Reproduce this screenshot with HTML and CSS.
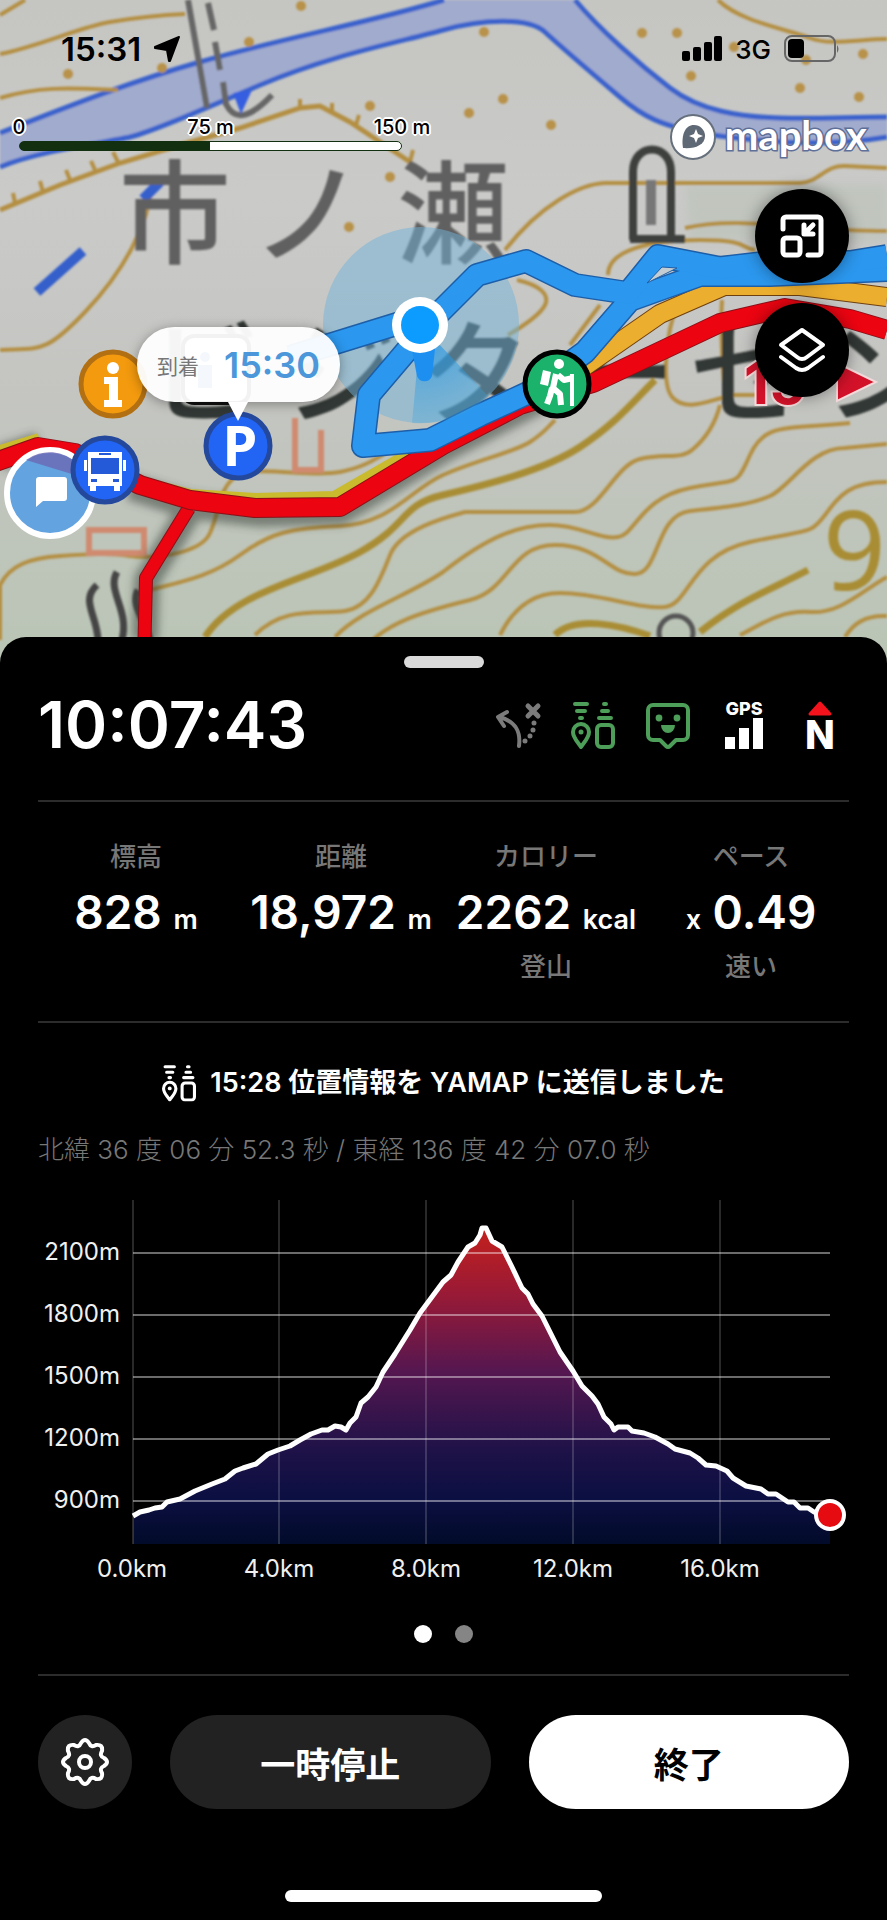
FILE: index.html
```html
<!DOCTYPE html>
<html lang="ja">
<head>
    <meta charset="utf-8">
    <meta name="viewport" content="width=device-width, initial-scale=1">
    <title>活動記録</title>
    <link rel="stylesheet" href="styles.css">
</head>
<body>
    <svg width="0" height="0" class="defs">
        <symbol id="mimamori" viewBox="0 0 44 48">
            <g fill="none" stroke="currentColor" stroke-width="4" stroke-linecap="round" stroke-linejoin="round">
                <path d="M4 3H16M6 10H14M9 17H11M33 3H35M31 10H37M28 17H40"/>
                <path d="M10 46C7 41 2 37 2 31a8 8 0 0 1 16 0c0 6-5 10-8 15z"/>
                <rect x="26" y="24" width="16" height="22" rx="4"/>
            </g>
            <circle cx="10" cy="31" r="2.5" fill="currentColor"/>
        </symbol>
    </svg>

    <section class="map">
        <svg class="map-art" viewBox="0 0 887 665" preserveAspectRatio="xMidYMin slice">
            <defs>
                <linearGradient id="ground" x1="0" y1="0" x2="0" y2="1">
                    <stop offset="0" stop-color="#c5c5c1"/>
                    <stop offset=".3" stop-color="#cacac9"/>
                    <stop offset=".6" stop-color="#c4c5c1"/>
                    <stop offset="1" stop-color="#bac5b5"/>
                </linearGradient>
                <radialGradient id="beam" gradientUnits="userSpaceOnUse" cx="420" cy="325" r="98">
                    <stop offset="0" stop-color="#1590ea"/>
                    <stop offset="1" stop-color="#3fa3dc" stop-opacity=".4"/>
                </radialGradient>
                <filter id="soft"><feGaussianBlur stdDeviation="1.2"/></filter>
                <filter id="shade"><feGaussianBlur stdDeviation="4"/></filter>
            </defs>
            <rect width="887" height="665" fill="url(#ground)"/>
            <g filter="url(#soft)">
                <path fill="#b7c1b3" d="M685 185H887V240H690z" opacity=".5" filter="url(#shade)"/>
                <!-- river -->
                <path fill="#a1abcd" d="M0 133C60 110 120 85 200 62S380 20 444 0H575C600 30 640 65 670 88S740 117 780 118S850 117 887 117V137C840 145 780 142 720 136S640 112 620 97S565 45 545 32S480 15 443 30S330 55 260 85S150 135 130 137S40 150 0 167z"/>
                <g fill="none" stroke="#3a62cc" stroke-width="5">
                    <path d="M0 133C60 110 120 85 200 62S380 20 444 0M575 0C600 30 640 65 670 88S740 117 780 118S850 117 887 117"/>
                    <path d="M0 167C40 150 110 142 130 137S190 115 260 85S400 42 443 30S530 18 545 32S600 80 620 97S660 128 720 136S840 145 887 137"/>
                </g>
                <!-- contour lines -->
                <g fill="none" stroke="#b48f42" stroke-width="4">
                    <path d="M0 15L25 0M0 54C40 46 80 27 110 22S160 15 185 14M0 98C40 86 70 88 118 90M718 0C740 22 790 30 810 38S860 39 887 39"/>
                    <path d="M0 210L60 185L120 163L180 145L240 128L300 108L320 106L350 122L410 162" stroke-width="5"/>
                    <path d="M15 203l-2-10M43 192l-3-11M70 180l-4-10M95 170l-4-9M118 162l-5-10M300 108v-9M332 112v-9M356 125l3-10M410 162l3-12"/>
                    <path d="M152 185C148 225 125 270 85 312S40 348 0 350"/>
                    <path d="M505 250C540 205 580 184 605 183H800C820 182 825 165 845 166L887 168M685 228C740 215 800 231 887 231M608 275C608 250 650 240 700 240S740 248 755 250M517 280C540 285 550 295 545 305S525 325 508 335M600 305L570 345"/>
                    <path d="M677 305C667 330 660 385 673 398S705 402 725 397C722 360 720 330 722 300M725 395H760"/>
                    <path d="M0 640V585C10 565 30 558 60 556S110 553 130 556S200 555 210 533S218 490 235 477S310 478 340 472S380 455 400 445"/>
                    <path d="M150 590C180 582 210 577 240 555S290 528 340 526S410 490 443 475S515 452 530 442S545 430 555 420"/>
                    <path d="M255 635C285 605 320 615 345 611S380 580 390 555S443 518 465 512H575C600 512 615 465 640 459S680 460 692 450S715 425 720 405"/>
                    <path d="M335 637C360 610 410 595 443 572C490 535 520 525 550 525S600 540 618 537S640 498 690 488S735 488 750 455S785 430 850 423"/>
                    <path d="M360 655C380 622 430 610 470 600S510 545 555 545S610 575 635 574S655 515 690 511S750 505 770 496S810 448 845 448L887 444"/>
                    <path d="M500 635C515 605 535 593 560 593C600 593 640 610 665 607S690 555 750 542S810 535 825 515S850 482 887 482"/>
                    <path d="M740 635C760 625 780 610 810 612S860 592 887 577M845 637C855 620 870 615 887 616"/>
                </g>
                <g fill="none" stroke="#a98d36" stroke-width="7">
                    <path d="M205 637C235 590 310 580 360 552S400 505 443 495S545 470 580 447S630 405 655 380"/>
                    <path d="M555 635C575 615 620 625 650 636M700 632C740 600 770 590 808 570"/>
                </g>
                <g fill="#b8924a">
                    <circle cx="68" cy="74" r="5"/><circle cx="162" cy="68" r="5"/><circle cx="249" cy="42" r="5"/><circle cx="301" cy="6" r="5"/>
                    <circle cx="370" cy="106" r="5"/><circle cx="390" cy="177" r="5"/><circle cx="349" cy="227" r="5"/><circle cx="484" cy="32" r="5"/>
                    <circle cx="503" cy="99" r="5"/><circle cx="469" cy="113" r="5"/><circle cx="551" cy="125" r="5"/><circle cx="642" cy="33" r="5"/>
                    <circle cx="677" cy="33" r="5"/><circle cx="691" cy="76" r="5"/><circle cx="800" cy="88" r="5"/><circle cx="859" cy="97" r="5"/><circle cx="863" cy="54" r="5"/><circle cx="734" cy="47" r="5"/><circle cx="806" cy="60" r="5"/>
                </g>
                <path d="M37 292L83 251M143 199L160 182" stroke="#355fcb" stroke-width="10"/>
                <path d="M188 0L207 108M208 3L214 30M215 42L220 70M223 82L226 104C235 122 250 118 272 95" fill="none" stroke="#666" stroke-width="6"/>
                <path d="M233 93L252 90L241 114z" fill="#355fe0"/>
                <!-- buildings and map signs -->
                <path d="M295 418V470H321V430M89 530H144V553H89z" fill="none" stroke="#cf8a70" stroke-width="6"/>
                <path d="M633 240V172C633 142 671 142 671 172V237M630 239H685" fill="none" stroke="#3c403c" stroke-width="8"/>
                <path d="M651 180V225" stroke="#777" stroke-width="10"/>
                <path d="M97 585C80 600 97 615 98 640M117 572C106 590 130 610 122 640M138 590C130 605 145 620 150 640" fill="none" stroke="#444" stroke-width="7"/>
                <circle cx="676" cy="633" r="17" fill="none" stroke="#555" stroke-width="5"/>
                <g class="place" fill="#606060">
                    <text x="175" y="255">市</text><text x="308" y="255">ノ</text><text x="453" y="255">瀬</text>
                </g>
                <g class="place" fill="#333735">
                    <text x="205" y="415">ビ</text><text x="340" y="415">ジ</text><text x="475" y="415">タ</text>
                    <text x="620" y="415">ー</text><text x="745" y="415">セ</text><text x="880" y="415">ン</text>
                </g>
                <text class="height" x="823" y="590">9</text>
            </g>

            <circle cx="421" cy="325" r="98" fill="#71b4da" opacity=".5"/>

            <!-- trails -->
            <g fill="none" stroke-linejoin="round">
                <path d="M0 458L40 445M130 487L190 506L260 514L340 512L443 450L560 390M145 640L147 580L190 510" stroke="#303a30" stroke-width="26" opacity=".5" filter="url(#shade)"/>
                <path d="M0 453L40 441M140 484L190 497L255 501L335 499L420 450" stroke="#c9bb2d" stroke-width="16"/>
                <path d="M189 508L146 578L144 660" stroke="#8a1018" stroke-width="14"/>
                <path d="M189 508L146 578L144 660" stroke="#ec0411" stroke-width="12"/>
                <path d="M-10 464L38 447L75 453L140 485L190 500L255 508L340 507L443 445L520 405L593 383L720 323L785 308L850 319L887 330" stroke="#8a1018" stroke-width="20"/>
                <path d="M-10 464L38 447L75 453L140 485L190 500L255 508L340 507L443 445L520 405L593 383L720 323L785 308L850 319L887 330" stroke="#ec0411" stroke-width="18"/>
                <path d="M585 366L660 314L724 286L800 286L887 297" stroke="#6e4010" stroke-width="20"/>
                <path d="M585 366L660 314L724 286L800 286L887 297" stroke="#ecae2e" stroke-width="18"/>
                <g stroke="#1d5ea8" stroke-width="24">
                    <path d="M290 357L400 323L420 335L369 395L363 446L430 440L480 415L530 392L585 352L630 300L700 275L770 275L887 270"/>
                    <path d="M430 322L477 275L526 261L575 285L628 293L658 256L720 268L770 262H850L887 256"/>
                </g>
                <g stroke="#2b97ee" stroke-width="21">
                    <path d="M290 357L400 323L420 335L369 395L363 446L430 440L480 415L530 392L585 352L630 300L700 275L770 275L887 270"/>
                    <path d="M430 322L477 275L526 261L575 285L628 293L658 256L720 268L770 262H850L887 256"/>
                </g>
            </g>
            <path d="M647 283L662 267L677 268z" fill="#c4cdd2" stroke="#1d5ea8"/>
            <path d="M421 325L412 423A98 98 0 0 0 488 396z" fill="url(#beam)" opacity=".75"/>
            <path d="M410 340H436L432 376a8 8 0 0 1-15 0z" fill="#1d8ff0"/>
            <circle cx="420" cy="325" r="28" fill="#fff"/>
            <circle cx="420" cy="325" r="19" fill="#0c9bff"/>

            <text class="minutes" x="744" y="404">15</text>
            <path d="M837 363L876 382L837 401z" fill="#d3122a" stroke="#f3d9d9" stroke-width="2"/>

            <!-- pins -->
            <g>
                <rect x="183" y="336" width="66" height="67" rx="11" fill="#fff" stroke="#111" stroke-width="4"/>
                <circle cx="205" cy="357" r="5" fill="#2a66c8"/>
                <path d="M198 365H212V388H198z" fill="#2a66c8"/>
            </g>
            <g>
                <circle cx="113" cy="384" r="32" fill="#f39a0e" stroke="#b27013" stroke-width="5"/>
                <circle cx="113" cy="368" r="6" fill="#fff"/>
                <path d="M104 377H118V400H122V407H104V400H109V384H104z" fill="#fff"/>
            </g>
            <g>
                <circle cx="50" cy="493" r="43" fill="#62a3e0" stroke="#fff" stroke-width="6"/>
                <path d="M26 460A40 40 0 0 1 78 464L75 475z" fill="#6c68b4" opacity=".8"/>
                <path d="M39 477H64a3 3 0 0 1 3 3V498a3 3 0 0 1-3 3H43L36 507V480a3 3 0 0 1 3-3z" fill="#fff"/>
            </g>
            <g>
                <circle cx="105" cy="470" r="32" fill="#2264f4" stroke="#24489c" stroke-width="5"/>
                <path d="M88 452h34v34h-2v5h-6v-5H96v5h-6v-5h-2zM84 460h3v11h-3zM123 460h3v11h-3z" fill="#fff"/>
                <path d="M91 458H119V474H91zM99 453h12v2H99zM91 479h6v3h-6zM113 479h6v3h-6z" fill="#2459d8"/>
            </g>
            <g>
                <circle cx="238" cy="446" r="32" fill="#2264f4" stroke="#24489c" stroke-width="5"/>
                <text class="parking" x="240" y="466">P</text>
            </g>
            <g>
                <circle cx="557" cy="384" r="32" fill="#1bb26c" stroke="#000" stroke-width="5"/>
                <circle cx="559" cy="364" r="5" fill="#fff"/>
                <path d="M543 370l8 2-3 14-8-2z" fill="#fff"/>
                <path d="M556 374L553 388L560 394L561 405M552 388L550 396L547 404M558 375L564 380L573 378" fill="none" stroke="#fff" stroke-width="6" stroke-linejoin="round"/>
                <path d="M572 374V406" stroke="#fff" stroke-width="4"/>
            </g>
        </svg>

        <div class="status-bar">
            <div class="clock">15:31
                <svg width="28" height="28" viewBox="0 0 28 28" stroke="#000" stroke-width="2" stroke-linejoin="round"><path d="M26 2L17 26H16L14 15L2 13V12z"/></svg>
            </div>
            <div class="signal">
                <svg width="40" height="26" viewBox="0 0 40 26"><rect y="15" width="8" height="10" rx="2"/><rect x="11" y="11" width="8" height="14" rx="2"/><rect x="22" y="6" width="8" height="19" rx="2"/><rect x="32" y="0" width="8" height="25" rx="2"/></svg>
                <span>3G</span>
                <svg width="58" height="28" viewBox="0 0 58 28"><rect x="1" y="1" width="50" height="25" rx="7" fill="none" stroke="#666" stroke-width="2"/><rect x="4" y="4" width="16" height="19" rx="4"/><path d="M53 10q3 4 0 8z" fill="#666"/></svg>
            </div>
        </div>

        <div class="map-info">
            <div class="scale">
                <div class="scale-labels"><span>0</span><span>75 m</span><span>150 m</span></div>
                <div class="scale-bar"></div>
            </div>
            <div class="mapbox">
                <svg width="48" height="48" viewBox="0 0 48 48"><circle cx="24" cy="24" r="22" fill="#fff" stroke="#66707c" stroke-width="2"/><path d="M14 35C12 22 16 12 25 12a11 11 0 0 1 11 11C36 32 26 36 14 35z" fill="#5f6875"/><path d="M27 16l2 5 5 2-5 2-2 5-2-5-5-2 5-2z" fill="#fff"/></svg>
                <span>mapbox</span>
            </div>
        </div>

        <div class="map-buttons">
            <button type="button" aria-label="縮小">
                <svg width="46" height="46" viewBox="0 0 46 46" fill="none" stroke="#fff" stroke-width="5" stroke-linecap="round" stroke-linejoin="round"><path d="M4 16V7a3 3 0 0 1 3-3H39a3 3 0 0 1 3 3V39a3 3 0 0 1-3 3H29"/><rect x="4" y="25" width="17" height="17" rx="3"/><path d="M34 12L26 20M25 12V21H34"/></svg>
            </button>
            <button type="button" aria-label="レイヤー">
                <svg width="48" height="48" viewBox="0 0 48 48" fill="none" stroke="#fff" stroke-width="4" stroke-linecap="round" stroke-linejoin="round"><path d="M24 4L45 19L29 31Q24 35 19 31L3 19z"/><path d="M3 31L18 42Q24 46 30 42L45 31"/></svg>
            </button>
        </div>

        <div class="callout"><small>到着</small><b>15:30</b></div>
    </section>

    <main class="sheet">
        <div class="handle"></div>

        <header class="head">
            <div class="timer">10:07:43</div>
            <div class="icons">
                <svg width="58" height="58" viewBox="0 0 58 58" fill="none" stroke="#7b7b7b" stroke-width="4" stroke-linecap="round" stroke-linejoin="round">
                    <path d="M32 50C34 34 28 25 12 21M20 16L11 21L17 30"/>
                    <path d="M41 10L51 20M51 10L41 20" stroke-width="5"/>
                    <path d="M47 27V27M46 34V34M43 40V40M38 45V45" stroke-width="5"/>
                </svg>
                <svg width="58" height="58" viewBox="0 0 58 58" color="#4d9e59"><use href="#mimamori" x="8" y="5" width="44" height="48"/></svg>
                <svg width="58" height="58" viewBox="0 0 58 58" fill="none" stroke="#4d9e59" stroke-width="4" stroke-linejoin="round">
                    <path d="M14 9H44a5 5 0 0 1 5 5V39a5 5 0 0 1-5 5H37L31 50Q29 52 27 50L21 44H14a5 5 0 0 1-5-5V14a5 5 0 0 1 5-5z"/>
                    <circle cx="20" cy="22" r="3.4" fill="#4d9e59" stroke="none"/><circle cx="38" cy="22" r="3.4" fill="#4d9e59" stroke="none"/>
                    <path d="M22 29H36a7 8 0 0 1-14 0z" fill="#4d9e59" stroke="none"/>
                </svg>
                <svg width="58" height="58" viewBox="0 0 58 58" fill="#fff"><text class="gps" x="29" y="19">GPS</text><path d="M10 41h10v12H10zM24 32h10v21H24zM38 22h10v31H38z"/></svg>
                <svg width="58" height="58" viewBox="0 0 58 58" fill="#fff"><path d="M19 18L29 7L39 18z" fill="#f3131c" stroke="#f3131c" stroke-width="3" stroke-linejoin="round"/><text class="north" x="29" y="53">N</text></svg>
            </div>
        </header>

        <section class="stats">
            <div class="stat"><span class="label">標高</span><span class="value">828 <small>m</small></span></div>
            <div class="stat"><span class="label">距離</span><span class="value">18,972 <small>m</small></span></div>
            <div class="stat"><span class="label">カロリー</span><span class="value">2262 <small>kcal</small></span><span class="label">登山</span></div>
            <div class="stat"><span class="label">ペース</span><span class="value"><small>x</small> 0.49</span><span class="label">速い</span></div>
        </section>

        <section class="record">
            <div class="notice">
                <svg width="34" height="38" viewBox="0 0 44 48"><use href="#mimamori"/></svg>
                <span>15:28 位置情報を YAMAP に送信しました</span>
            </div>
            <div class="coords">北緯 36 度 06 分 52.3 秒 / 東経 136 度 42 分 07.0 秒</div>

            <svg class="chart" viewBox="0 0 811 400">
                <defs>
                    <linearGradient id="slope" gradientUnits="userSpaceOnUse" x1="0" y1="38" x2="0" y2="354">
                        <stop offset="0" stop-color="#c3201c"/>
                        <stop offset=".2" stop-color="#9b1a35"/>
                        <stop offset=".45" stop-color="#561750"/>
                        <stop offset=".7" stop-color="#1f1248"/>
                        <stop offset=".85" stop-color="#0c0f42"/>
                        <stop offset="1" stop-color="#020b2a"/>
                    </linearGradient>
                </defs>
                <path fill="url(#slope)" d="M95 354V326L102 322L111 320L117 318L124 317L129 312L142 309L157 301L174 294L187 289L197 281L205 278L218 274L230 264L240 260L252 256L262 250L273 244L284 240L290 240L297 236L303 237L308 240L312 233L318 227L323 213L330 207L338 197L345 182L357 164L372 140L382 123L405 92L413 85L420 72L430 57L437 53L442 45L444 38H448L454 51L464 57L474 77L484 98L490 104L495 114L504 126L522 162L535 181L544 196L554 206L560 214L566 227L573 234L576 240L580 237H590L594 241L606 243L617 247L630 254L637 259L652 263L660 268L668 275L678 276L689 281L695 288L708 296L723 299L730 304H738L750 312H756L762 318H770L776 322L792 325V354z"/>
                <path stroke="#fff" stroke-opacity=".16" stroke-width="2" d="M95 10V354M241 10V354M388 10V354M535 10V354M682 10V354"/>
                <path stroke="#fff" stroke-opacity=".42" stroke-width="2" d="M95 63H792M95 125H792M95 187H792M95 249H792M95 311H792"/>
                <path fill="none" stroke="#fff" stroke-width="5" stroke-linejoin="round" d="M95 326L102 322L111 320L117 318L124 317L129 312L142 309L157 301L174 294L187 289L197 281L205 278L218 274L230 264L240 260L252 256L262 250L273 244L284 240L290 240L297 236L303 237L308 240L312 233L318 227L323 213L330 207L338 197L345 182L357 164L372 140L382 123L405 92L413 85L420 72L430 57L437 53L442 45L444 38H448L454 51L464 57L474 77L484 98L490 104L495 114L504 126L522 162L535 181L544 196L554 206L560 214L566 227L573 234L576 240L580 237H590L594 241L606 243L617 247L630 254L637 259L652 263L660 268L668 275L678 276L689 281L695 288L708 296L723 299L730 304H738L750 312H756L762 318H770L776 322L792 325"/>
                <circle cx="792" cy="325" r="14" fill="#e60b10" stroke="#fff" stroke-width="4"/>
                <g class="axis-y">
                    <text x="82" y="70">2100m</text>
                    <text x="82" y="132">1800m</text>
                    <text x="82" y="194">1500m</text>
                    <text x="82" y="256">1200m</text>
                    <text x="82" y="318">900m</text>
                </g>
                <g class="axis-x">
                    <text x="94" y="387">0.0km</text>
                    <text x="241" y="387">4.0km</text>
                    <text x="388" y="387">8.0km</text>
                    <text x="535" y="387">12.0km</text>
                    <text x="682" y="387">16.0km</text>
                </g>
            </svg>

            <div class="pager"><i class="on"></i><i></i></div>
        </section>

        <footer class="controls">
            <button type="button" class="gear" aria-label="設定">
                <svg width="50" height="50" viewBox="0 0 50 50" fill="none" stroke="#fff" stroke-width="4" stroke-linejoin="round">
                    <path d="M21 6Q25 0 29 6Q31 11 36 8Q43 7 42 14Q39 19 44 21Q50 25 44 29Q39 31 42 36Q43 43 36 42Q31 39 29 44Q25 50 21 44Q19 39 14 42Q7 43 8 36Q11 31 6 29Q0 25 6 21Q11 19 8 14Q7 7 14 8Q19 11 21 6z"/>
                    <circle cx="25" cy="25" r="6"/>
                </svg>
            </button>
            <button type="button" class="pause">一時停止</button>
            <button type="button" class="finish">終了</button>
        </footer>
        <div class="home-bar"></div>
    </main>
</body>
</html>
```
FILE: styles.css
```css
* {
    box-sizing: border-box;
}
body {
    margin: 0;
    background: #000;
    color: #fff;
    font-family: Inter, "Noto Sans CJK JP", sans-serif;
}
button {
    border: 0;
    padding: 0;
    font-family: inherit;
    cursor: pointer;
}
svg {
    display: block;
    flex: none;
}
.defs {
    position: absolute;
}

/* map */
.map {
    position: relative;
    height: 665px;
    padding-top: 30px;
    overflow: hidden;
    color: #000;
}
.map-art {
    position: absolute;
    left: 0;
    top: 0;
    width: 100%;
    height: 100%;
}
.place {
    font-family: "Noto Sans CJK JP", sans-serif;
    font-size: 112px;
    font-weight: 500;
    text-anchor: middle;
}
.height {
    font-family: "Noto Sans", sans-serif;
    font-size: 110px;
    fill: #a98d36;
}
.minutes {
    font-size: 58px;
    font-weight: 700;
    fill: #d3122a;
    stroke: #f3d9d9;
    stroke-width: 4px;
    paint-order: stroke;
}
.parking {
    font-family: "Noto Sans", sans-serif;
    font-size: 56px;
    font-weight: 700;
    fill: #fff;
    text-anchor: middle;
}
.status-bar,
.map-info {
    position: relative;
    display: flex;
    justify-content: space-between;
}
.status-bar {
    align-items: center;
    height: 38px;
    padding: 0 45px 0 61px;
}
.clock {
    display: flex;
    align-items: center;
    gap: 12px;
    font-size: 33px;
    font-weight: 600;
}
.signal {
    display: flex;
    align-items: center;
    gap: 13px;
    font-size: 26px;
    font-weight: 500;
}
.map-info {
    align-items: flex-start;
    margin-top: 45px;
    padding: 0 20px 0 19px;
}
.scale {
    width: 383px;
}
.scale-labels {
    display: flex;
    justify-content: space-between;
    height: 28px;
    font-size: 20px;
    line-height: 28px;
    font-weight: 500;
    text-shadow: 2px 0 #fff, -2px 0 #fff, 0 2px #fff, 0 -2px #fff, 1px 1px #fff, -1px -1px #fff, 1px -1px #fff, -1px 1px #fff;
}
.scale-labels span {
    display: flex;
    justify-content: center;
    width: 0;
    white-space: nowrap;
}
.scale-bar {
    height: 10px;
    border: 1px solid #12300f;
    border-radius: 5px;
    background: linear-gradient(90deg, #12300f 50%, #fff 50%);
}
.mapbox {
    display: flex;
    align-items: center;
    gap: 8px;
    height: 48px;
    color: #fff;
    font-family: Lato, sans-serif;
    font-size: 40px;
    line-height: 48px;
    font-weight: 700;
}
.mapbox span {
    padding-bottom: 4px;
    -webkit-text-stroke: 3px #5e6f98;
    paint-order: stroke;
}
.map-buttons {
    position: relative;
    display: flex;
    flex-direction: column;
    align-items: flex-end;
    gap: 20px;
    padding: 28px 38px 0;
}
.map-buttons button {
    display: flex;
    align-items: center;
    justify-content: center;
    width: 94px;
    height: 94px;
    border-radius: 50%;
    background: #000;
    box-shadow: 0 0 16px rgba(0, 0, 0, .4);
}
.callout {
    position: absolute;
    left: 137px;
    top: 327px;
    display: flex;
    align-items: center;
    justify-content: space-between;
    width: 203px;
    height: 75px;
    padding: 0 20px;
    border-radius: 38px;
    background: rgba(255, 255, 255, .95);
    box-shadow: 0 2px 12px rgba(0, 0, 0, .35);
}
.callout:after {
    content: "";
    position: absolute;
    left: 91px;
    top: 75px;
    border: 10px solid transparent;
    border-top: 19px solid #fff;
    border-bottom: 0;
}
.callout small {
    color: #777;
    font-size: 21px;
}
.callout b {
    color: #4b97da;
    font-size: 36px;
    font-weight: 600;
}

/* bottom sheet */
.sheet {
    position: relative;
    margin-top: -28px;
    padding: 19px 38px;
    border-radius: 26px 26px 0 0;
    background: #000;
}
.handle {
    width: 80px;
    height: 12px;
    margin: 0 auto;
    border-radius: 6px;
    background: #dadada;
}
.head {
    display: flex;
    align-items: center;
    justify-content: space-between;
    padding: 17px 0 35px;
    border-bottom: 2px solid #2c2c2c;
}
.timer {
    font-size: 64px;
    line-height: 80px;
    font-weight: 600;
}
.icons {
    display: flex;
    gap: 18px;
}
.gps {
    font-size: 18px;
    font-weight: 800;
    text-anchor: middle;
}
.north {
    font-size: 39px;
    font-weight: 800;
    text-anchor: middle;
}
.stats {
    display: grid;
    grid-template-columns: repeat(4, 1fr);
    column-gap: 9px;
    padding: 38px 0 37px;
    border-bottom: 2px solid #2c2c2c;
}
.stat {
    display: flex;
    flex-direction: column;
    align-items: center;
    gap: 4px;
    white-space: nowrap;
}
.label {
    color: #777;
    font-size: 26px;
    line-height: 34px;
    font-weight: 500;
}
.value {
    font-size: 46px;
    line-height: 68px;
    font-weight: 600;
}
.value small {
    font-size: 27px;
    line-height: 34px;
}
.record {
    border-bottom: 2px solid #2c2c2c;
    padding: 42px 0 31px;
}
.notice {
    display: flex;
    align-items: center;
    justify-content: center;
    gap: 14px;
    height: 36px;
    font-size: 27px;
    line-height: 36px;
    font-weight: 600;
}
.coords {
    margin-top: 29px;
    color: #777;
    font-size: 26px;
    line-height: 40px;
    font-weight: 300;
}
.chart {
    width: 100%;
    margin-top: 20px;
    overflow: visible;
    fill: #f0f0f0;
    font-size: 24px;
}
.axis-y {
    text-anchor: end;
}
.axis-x {
    text-anchor: middle;
}
.pager {
    display: flex;
    justify-content: center;
    gap: 23px;
    margin-top: 35px;
}
.pager i {
    width: 18px;
    height: 18px;
    border-radius: 50%;
    background: #858585;
}
.pager .on {
    background: #fff;
}
.controls {
    display: flex;
    gap: 38px;
    padding: 39px 0 81px;
}
.controls button {
    flex: 1;
    height: 94px;
    border-radius: 47px;
    background: #222;
    color: #fff;
    font-size: 35px;
    font-weight: 700;
}
.controls .gear {
    flex: none;
    display: flex;
    align-items: center;
    justify-content: center;
    width: 94px;
}
.controls .finish {
    background: #fff;
    color: #000;
}
.home-bar {
    width: 317px;
    height: 12px;
    margin: 0 auto;
    border-radius: 6px;
    background: #fff;
}
```
